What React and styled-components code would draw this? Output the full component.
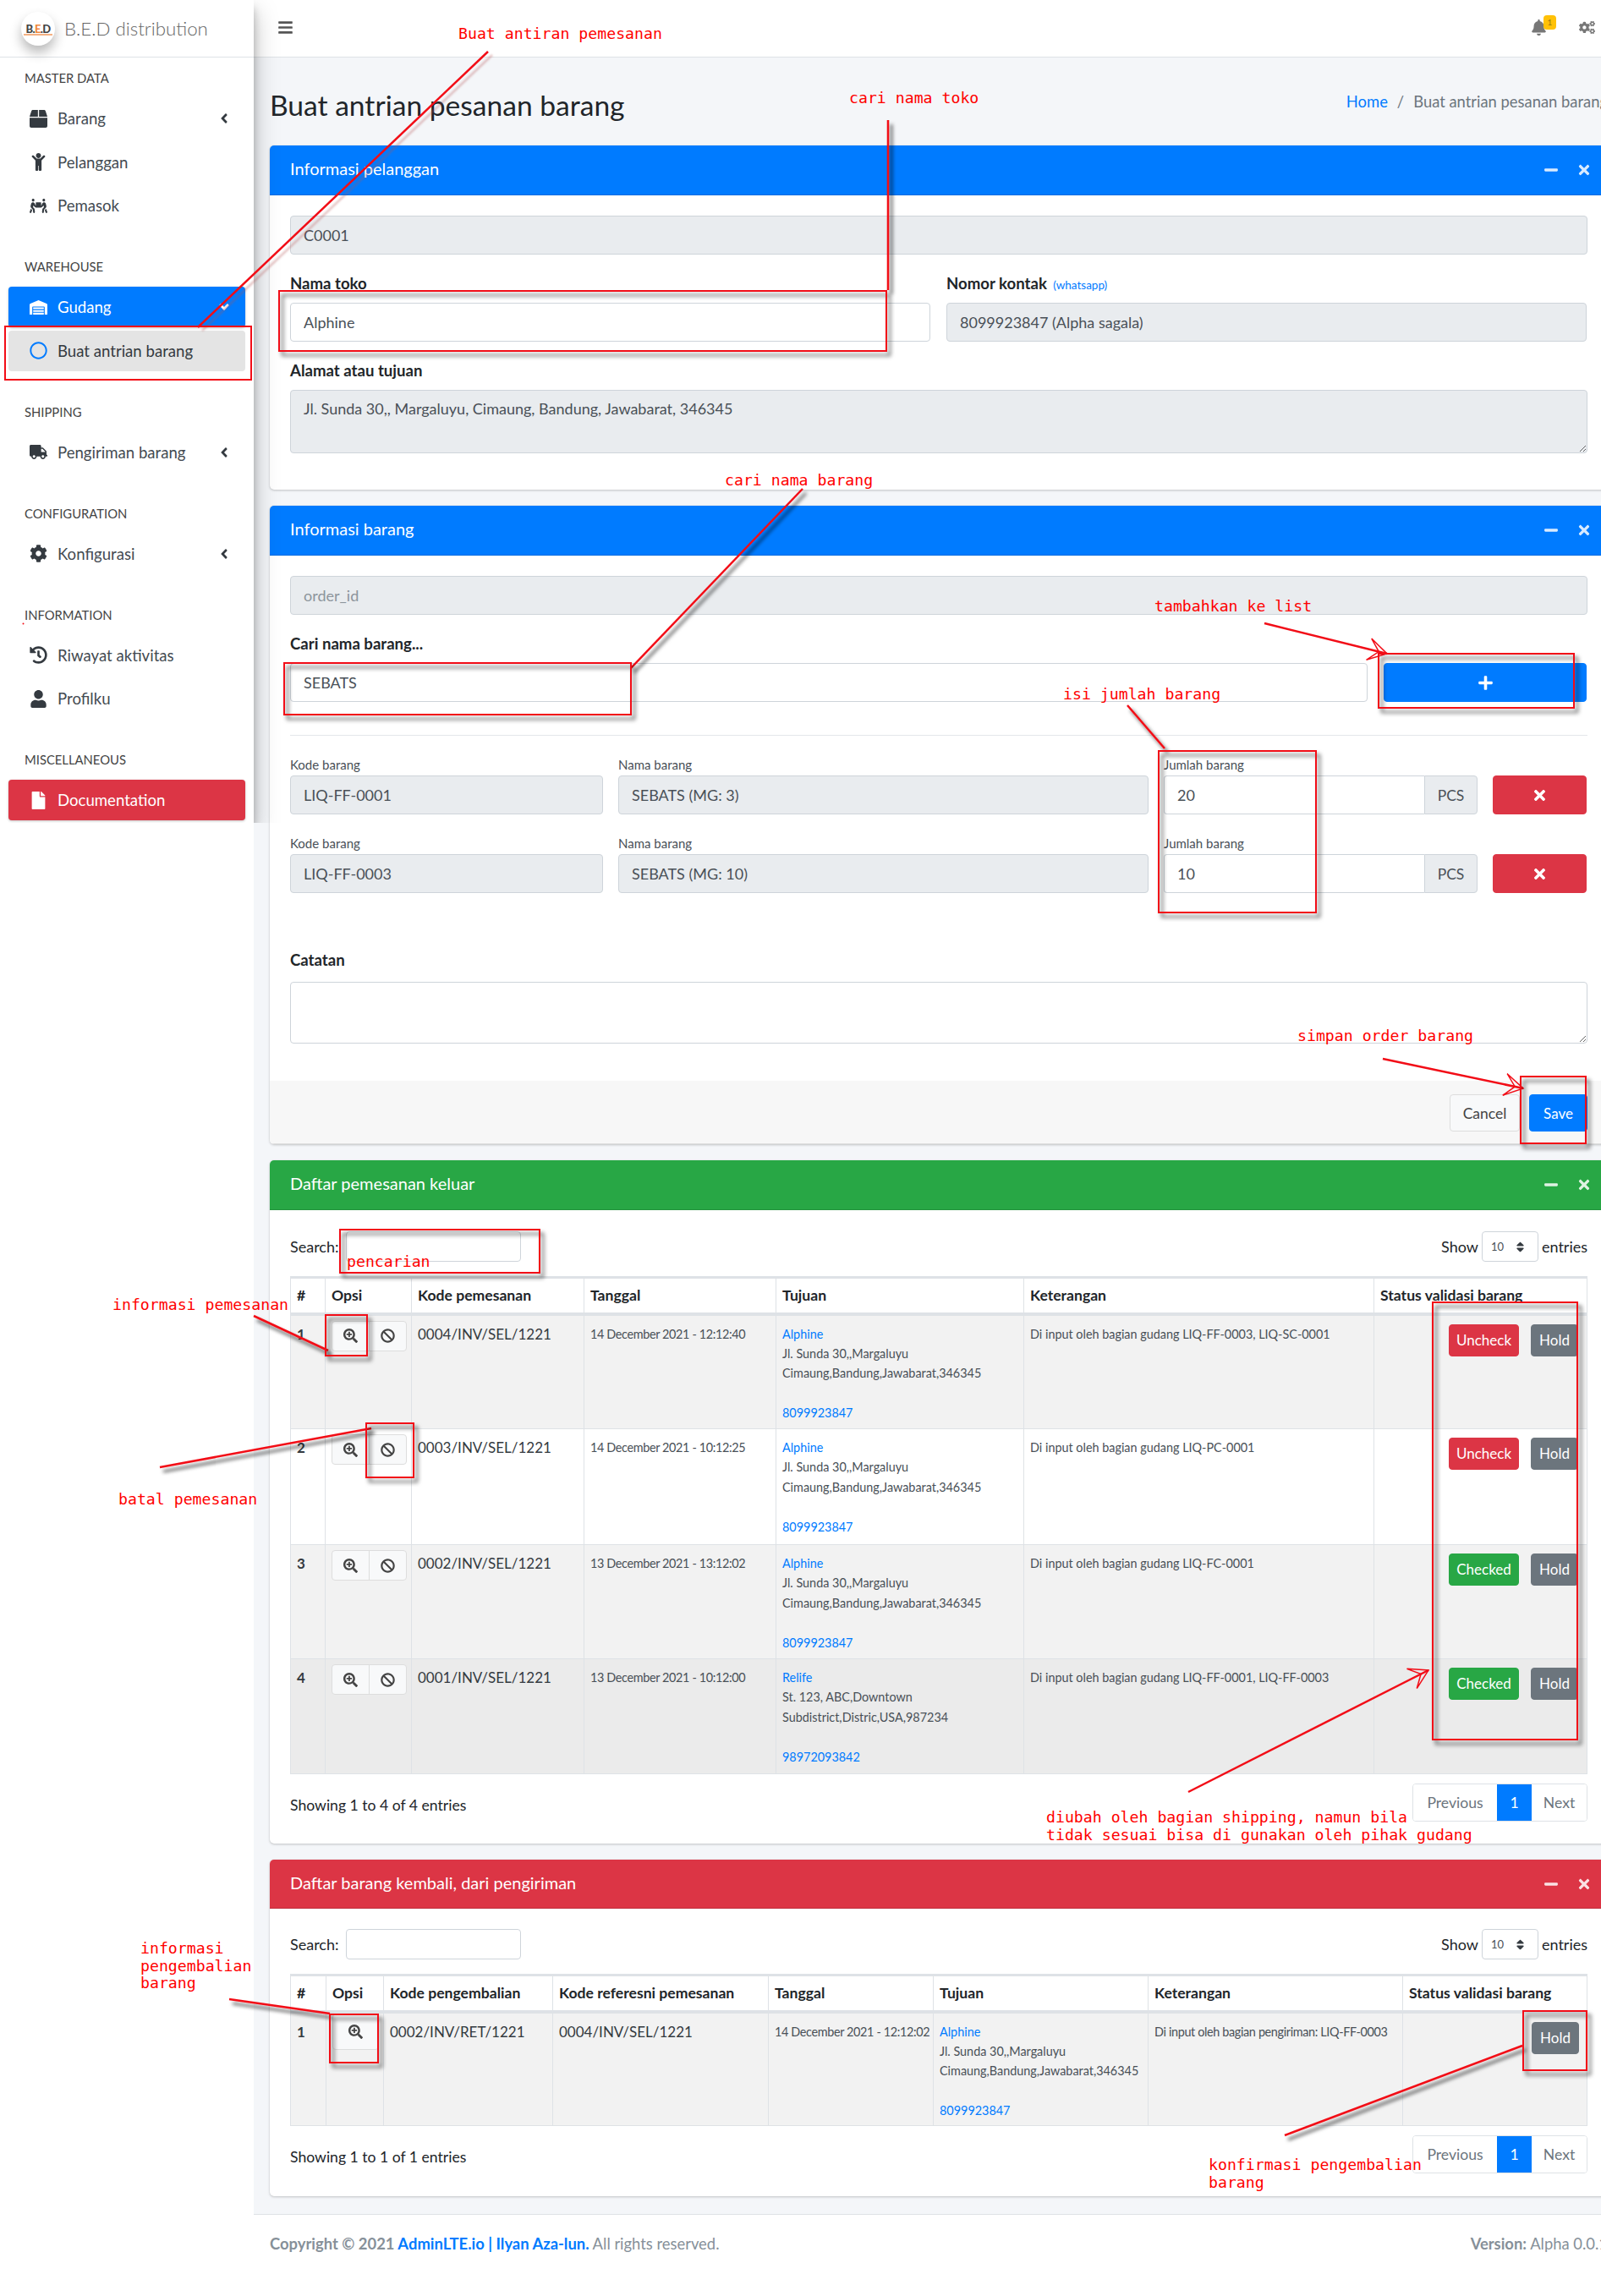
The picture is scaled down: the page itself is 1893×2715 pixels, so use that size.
import React from "react";
import styled, { createGlobalStyle } from "styled-components";
import {
  FaAngleLeft,
  FaBan,
  FaBars,
  FaBell,
  FaBox,
  FaChild,
  FaCog,
  FaCogs,
  FaFile,
  FaHistory,
  FaMinus,
  FaPeopleCarry,
  FaPlus,
  FaRegCircle,
  FaSearchPlus,
  FaSort,
  FaTimes,
  FaTruck,
  FaUser,
  FaWarehouse,
} from "react-icons/fa";

const GlobalStyle = createGlobalStyle`
  html, body { margin: 0; padding: 0; background: #fff; }
  * { box-sizing: border-box; }
  body {
    font-family: Lato, "Noto Sans", sans-serif;
    font-size: 18px;
    color: #212529;
  }
`;

const Page = styled.div`
  position: relative;
  display: flex;
  width: 1893px;
  height: 2715px;
  overflow: hidden;
  background: #fff;
`;

/* ---------- sidebar ---------- */
const Sidebar = styled.aside`
  position: relative;
  z-index: 3;
  flex: 0 0 300px;
  height: 973px;
  background: #fff;
  box-shadow: 0 14px 28px rgba(0, 0, 0, 0.25), 0 10px 10px rgba(0, 0, 0, 0.22);
  clip-path: inset(0 -40px 0 0);
`;

const Brand = styled.div`
  display: flex;
  align-items: center;
  gap: 11px;
  height: 68px;
  padding-left: 25px;
  border-bottom: 1px solid #dee2e6;
`;

const LogoCircle = styled.div`
  position: relative;
  display: flex;
  align-items: center;
  justify-content: center;
  width: 40px;
  height: 40px;
  border-radius: 50%;
  background: #fff;
  box-shadow: 0 8px 14px rgba(0, 0, 0, 0.28);
  font-size: 13px;
  font-weight: 900;
  letter-spacing: -0.6px;
  color: #444;
  b { color: #f08a3c; }
  &::after {
    content: "";
    position: absolute;
    left: 3px;
    right: 3px;
    top: 26px;
    height: 2px;
    background: #f4b183;
  }
`;

const BrandName = styled.span`
  font-size: 22.3px;
  font-weight: 300;
  color: #666;
`;

const SideNav = styled.nav`
  display: flex;
  flex-direction: column;
  gap: 36px;
  padding: 12px 10px 0;
`;

const NavSection = styled.div`
  display: flex;
  flex-direction: column;
  gap: 3.5px;
`;

const NavHeader = styled.div`
  height: 24px;
  margin-bottom: 8.5px;
  padding-left: 19px;
  font-size: 14.8px;
  line-height: 24px;
  color: #444;
`;

const NavItem = styled.div`
  display: flex;
  align-items: center;
  height: 48px;
  padding: 0 19px 0 20px;
  border-radius: 4px;
  font-size: 18.6px;
  color: ${(p) => (p.$tone ? (p.$tone === "sub" ? "#343a40" : "#fff") : "#444b52")};
  background: ${(p) =>
    p.$tone === "blue"
      ? "#007bff"
      : p.$tone === "red"
      ? "#dc3545"
      : p.$tone === "sub"
      ? "#e4e4e4"
      : "transparent"};
  box-shadow: ${(p) =>
    p.$tone === "sub" || !p.$tone ? "none" : "0 1px 3px rgba(0, 0, 0, 0.24)"};
`;

const NavIcon = styled.span`
  display: flex;
  flex: 0 0 30px;
  align-items: center;
  justify-content: center;
  margin-right: 8px;
  font-size: 21px;
  color: ${(p) => (p.$tone === "sub" ? "#007bff" : p.$tone ? "#fff" : "#343a40")};
  svg { flex: none; width: auto; }
`;

const NavArrow = styled.span`
  display: flex;
  margin-left: auto;
  margin-right: -3px;
  font-size: 18px;
  color: ${(p) => (p.$open ? "#fff" : "#343a40")};
  transform: ${(p) => (p.$open ? "rotate(-90deg)" : "none")};
`;

/* ---------- main column ---------- */
const Main = styled.div`
  flex: 0 0 1619px;
  display: flex;
  flex-direction: column;
`;

const Navbar = styled.header`
  display: flex;
  align-items: center;
  height: 68px;
  padding: 0 34px 2px 28px;
  background: #fff;
  border-bottom: 1px solid #dee2e6;
  color: #777;
  font-size: 19px;
  svg { width: auto; }
`;

const Burger = styled.span`
  display: flex;
  color: #555;
`;

const NavbarRight = styled.div`
  display: flex;
  align-items: center;
  gap: 38px;
  margin-left: auto;
`;

const BellWrap = styled.span`
  position: relative;
  display: flex;
`;

const BellBadge = styled.span`
  position: absolute;
  top: -5px;
  left: 15px;
  width: 15px;
  height: 17px;
  border-radius: 4px;
  background: #ffc107;
  color: #9a7a10;
  font-size: 10px;
  line-height: 17px;
  text-align: center;
`;

const Content = styled.main`
  flex: 1;
  padding: 0 19px;
  background: #f4f6f9;
`;

const ContentHeader = styled.div`
  display: flex;
  justify-content: space-between;
  height: 104px;
  padding-top: 34px;
`;

const PageTitle = styled.h1`
  margin: 0;
  font-size: 33.6px;
  font-weight: 400;
  line-height: 44px;
  color: #212529;
`;

const Breadcrumb = styled.div`
  display: flex;
  gap: 11px;
  margin-top: 6px;
  font-size: 18.4px;
  line-height: 24px;
  color: #6c757d;
`;

const Link = styled.a`
  color: #007bff;
`;

const Card = styled.section`
  margin-bottom: 19px;
  border-radius: 5px;
  background: #fff;
  box-shadow: 0 0 1px rgba(0, 0, 0, 0.125), 0 1px 3px rgba(0, 0, 0, 0.2);
  overflow: hidden;
`;

const CardHeader = styled.div`
  display: flex;
  align-items: center;
  justify-content: space-between;
  height: ${(p) => p.$height || 59}px;
  padding: 0 19px 0 24px;
  background: ${(p) => p.$color};
  border-bottom: 1px solid rgba(0, 0, 0, 0.125);
  color: #fff;
`;

const CardTitle = styled.h3`
  margin: 0 0 4px;
  font-size: 20px;
  font-weight: 400;
`;

const CardTools = styled.div`
  display: flex;
  align-items: center;
  gap: 21px;
  font-size: 18px;
  color: rgba(255, 255, 255, 0.85);
  svg { display: block; width: auto; }
`;

const CardBody = styled.div`
  padding: ${(p) => p.$top || 24}px 24px ${(p) => p.$bottom || 19}px;
`;

const FormGroup = styled.div`
  margin-bottom: 23px;
`;

const Row = styled.div`
  display: grid;
  grid-template-columns: 757px 757px;
  column-gap: 19px;
`;

const Label = styled.label`
  display: block;
  height: 24px;
  margin-bottom: ${(p) => p.$gap || 10}px;
  font-size: 18.6px;
  font-weight: 700;
  line-height: 22px;
  color: #212529;
`;

const LabelNote = styled.small`
  margin-left: 3px;
  font-size: 13.5px;
  font-weight: 400;
  color: #007bff;
`;

const Input = styled.input`
  display: block;
  width: 100%;
  height: ${(p) => p.$height || 46}px;
  padding: 0 15px;
  border: 1px solid #ced4da;
  border-radius: 4px;
  background: ${(p) => (p.readOnly ? "#e9ecef" : "#fff")};
  font: inherit;
  font-size: 18px;
  color: #495057;
  outline: none;
  &::placeholder { color: #8d959c; }
`;

const TextArea = styled.textarea`
  display: block;
  width: 100%;
  height: ${(p) => p.$height}px;
  padding: 10px 15px;
  border: 1px solid #ced4da;
  border-radius: 4px;
  background: ${(p) => (p.readOnly ? "#e9ecef" : "#fff")};
  font: inherit;
  font-size: 18px;
  color: #495057;
  outline: none;
`;

const SearchRow = styled.div`
  display: grid;
  grid-template-columns: 1274px 240px;
  column-gap: 19px;
  margin-bottom: 39px;
`;

const Button = styled.button`
  display: inline-flex;
  align-items: center;
  justify-content: center;
  height: ${(p) => p.$height || 38}px;
  width: ${(p) => (p.$width ? `${p.$width}px` : "auto")};
  padding: 0;
  border: 1px solid ${(p) => p.$bg};
  border-radius: 4px;
  background: ${(p) => p.$bg};
  color: #fff;
  font: inherit;
  font-size: 17px;
  svg { font-size: 19px; width: auto; }
`;

const Divider = styled.hr`
  margin: 0 0 23px;
  border: 0;
  border-top: 1px solid #e4e7ea;
`;

const ItemRow = styled.div`
  display: grid;
  grid-template-columns: 370px 627px 371px 111px;
  column-gap: 18px;
  margin-bottom: 23px;
  align-items: end;
`;

const SmallLabel = styled.label`
  display: block;
  height: 24px;
  padding-top: 1px;
  font-size: 15px;
  line-height: 20px;
  color: #495057;
`;

const InputGroup = styled.div`
  display: flex;
`;

const GroupedInput = styled(Input)`
  flex: 1;
  min-width: 0;
  border-radius: 4px 0 0 4px;
  border-right: 0;
`;

const GroupAddon = styled.span`
  display: flex;
  flex: 0 0 63px;
  align-items: center;
  justify-content: center;
  height: 46px;
  border: 1px solid #ced4da;
  border-radius: 0 4px 4px 0;
  background: #e9ecef;
  color: #495057;
  font-size: 17.5px;
`;

const CatatanGroup = styled.div`
  margin-top: 68px;
  padding-bottom: 43px;
`;

const CardFooter = styled.div`
  display: flex;
  justify-content: flex-end;
  gap: 11px;
  height: 75px;
  padding: 16px 24px 0;
  background: #f7f7f7;
  border-bottom: 1px solid #ddd;
`;

const GhostButton = styled.button`
  width: 83px;
  height: 44px;
  border: 1px solid #ddd;
  border-radius: 4px;
  background: #f8f9fa;
  color: #444;
  font: inherit;
  font-size: 17.5px;
`;

/* ---------- data tables ---------- */
const TableTop = styled.div`
  display: flex;
  align-items: center;
  justify-content: space-between;
  height: 36px;
  margin-bottom: 17px;
  font-size: 18px;
`;

const SearchLabel = styled.label`
  display: flex;
  align-items: center;
  gap: 9px;
`;

const SearchInput = styled.input`
  width: 207px;
  height: 36px;
  border: 1px solid #ced4da;
  border-radius: 4px;
  background: #fff;
`;

const ShowLabel = styled.div`
  display: flex;
  align-items: center;
  gap: 4px;
`;

const SelectBox = styled.span`
  display: flex;
  align-items: center;
  justify-content: space-between;
  width: 67px;
  height: 36px;
  padding: 0 13px 0 10px;
  border: 1px solid #ced4da;
  border-radius: 4px;
  color: #495057;
  font-size: 13px;
  svg { font-size: 15px; width: auto; color: #343a40; }
`;

const Table = styled.table`
  width: 1533px;
  border-collapse: collapse;
  table-layout: fixed;
  border-top: 3px solid #dee2e6;
`;

const Th = styled.th`
  height: 43px;
  padding: 0 7px;
  border: 1px solid #dee2e6;
  border-top: 0;
  border-bottom: 4px solid #dee2e6;
  font-size: 17.6px;
  font-weight: 700;
  text-align: left;
  color: #212529;
  white-space: nowrap;
`;

const Tr = styled.tr`
  height: ${(p) => p.$height}px;
  background: ${(p) => p.$bg};
`;

const Td = styled.td`
  padding: ${(p) => p.$top ?? 10}px ${(p) => p.$right ?? 7}px 0 7px;
  border: 1px solid #dee2e6;
  vertical-align: top;
  font-size: ${(p) => (p.$small ? 14.4 : 17)}px;
  font-weight: ${(p) => (p.$bold ? 700 : 400)};
  line-height: 23.4px;
  color: ${(p) => (p.$small ? "#495057" : "#343a40")};
  letter-spacing: ${(p) => (p.$tight ? "-0.35px" : "0")};
  white-space: ${(p) => (p.$tight ? "nowrap" : "normal")};
`;

const AddressLine = styled.div`
  min-height: 23.4px;
  color: ${(p) => (p.$link ? "#007bff" : "inherit")};
`;

const BtnGroup = styled.div`
  display: flex;
  width: ${(p) => (p.$single ? 55 : 89)}px;
  height: ${(p) => (p.$single ? 43 : 36)}px;
  border: 1px solid #ddd;
  border-radius: 4px;
  background: #f8f9fa;
`;

const IconBtn = styled.span`
  display: flex;
  flex: 1;
  align-items: center;
  justify-content: center;
  font-size: 17px;
  color: #444;
  & + & { border-left: 1px solid #ddd; }
`;

const StatusCell = styled.div`
  display: flex;
  justify-content: flex-end;
  gap: 14px;
`;

const TableBottom = styled.div`
  display: flex;
  align-items: flex-start;
  justify-content: space-between;
  margin-top: 11px;
  font-size: 17.6px;
`;

const ShowingText = styled.div`
  padding-top: 15px;
`;

const Pagination = styled.div`
  display: flex;
  height: 45px;
  border: 1px solid #dee2e6;
  border-radius: 4px;
  overflow: hidden;
  color: #6c757d;
`;

const PageLink = styled.span`
  display: flex;
  align-items: center;
  justify-content: center;
  width: ${(p) => p.$width}px;
  background: ${(p) => (p.$active ? "#007bff" : "#fff")};
  color: ${(p) => (p.$active ? "#fff" : "#6c757d")};
`;

const Footer = styled.footer`
  display: flex;
  justify-content: space-between;
  height: 97px;
  padding: 23px 19px 0;
  border-top: 1px solid #dee2e6;
  font-size: 18.4px;
  line-height: 22px;
  color: #869099;
  b { font-weight: 700; }
`;

const FooterLink = styled.a`
  color: #007bff;
  font-weight: 700;
`;

/* ---------- red annotations on top of the page ---------- */
const Note = styled.div`
  position: absolute;
  z-index: 6;
  left: ${(p) => p.$x}px;
  top: ${(p) => p.$y}px;
  font-family: "DejaVu Sans Mono", monospace;
  font-size: 18.2px;
  line-height: 20.5px;
  color: #ff0000;
  white-space: pre;
`;

const Frame = styled.div`
  position: absolute;
  z-index: 5;
  left: ${(p) => p.$x}px;
  top: ${(p) => p.$y}px;
  width: ${(p) => p.$w}px;
  height: ${(p) => p.$h}px;
  border: 2px solid #f20d17;
  filter: ${(p) => (p.$flat ? "none" : "drop-shadow(4px 5px 2.5px rgba(0, 0, 0, 0.7))")};
  pointer-events: none;
`;

const Overlay = styled.svg`
  position: absolute;
  z-index: 5;
  left: 0;
  top: 0;
  width: 1893px;
  height: 2715px;
  pointer-events: none;
`;

const menu = [
  {
    title: "MASTER DATA",
    items: [
      { label: "Barang", icon: <FaBox />, arrow: true },
      { label: "Pelanggan", icon: <FaChild /> },
      { label: "Pemasok", icon: <FaPeopleCarry /> },
    ],
  },
  {
    title: "WAREHOUSE",
    items: [
      { label: "Gudang", icon: <FaWarehouse />, arrow: true, tone: "blue" },
      { label: "Buat antrian barang", icon: <FaRegCircle />, tone: "sub" },
    ],
  },
  {
    title: "SHIPPING",
    items: [{ label: "Pengiriman barang", icon: <FaTruck />, arrow: true }],
  },
  {
    title: "CONFIGURATION",
    items: [{ label: "Konfigurasi", icon: <FaCog />, arrow: true }],
  },
  {
    title: "INFORMATION",
    items: [
      { label: "Riwayat aktivitas", icon: <FaHistory /> },
      { label: "Profilku", icon: <FaUser /> },
    ],
  },
  {
    title: "MISCELLANEOUS",
    items: [{ label: "Documentation", icon: <FaFile />, tone: "red" }],
  },
];

const orderCols = [41, 102, 204, 227, 293, 414, 252];
const returnCols = [42, 68, 200, 255, 195, 254, 301, 218];

const alphine = {
  name: "Alphine",
  lines: ["Jl. Sunda 30,,Margaluyu", "Cimaung,Bandung,Jawabarat,346345"],
  phone: "8099923847",
};

const orders = [
  {
    no: 1,
    code: "0004/INV/SEL/1221",
    date: "14 December 2021 - 12:12:40",
    to: alphine,
    note: "Di input oleh bagian gudang LIQ-FF-0003, LIQ-SC-0001",
    status: "Uncheck",
    height: 136,
    bg: "#f2f2f2",
  },
  {
    no: 2,
    code: "0003/INV/SEL/1221",
    date: "14 December 2021 - 10:12:25",
    to: alphine,
    note: "Di input oleh bagian gudang LIQ-PC-0001",
    status: "Uncheck",
    height: 137,
    bg: "#fff",
  },
  {
    no: 3,
    code: "0002/INV/SEL/1221",
    date: "13 December 2021 - 13:12:02",
    to: alphine,
    note: "Di input oleh bagian gudang LIQ-FC-0001",
    status: "Checked",
    height: 135,
    bg: "#f2f2f2",
  },
  {
    no: 4,
    code: "0001/INV/SEL/1221",
    date: "13 December 2021 - 10:12:00",
    to: {
      name: "Relife",
      lines: ["St. 123, ABC,Downtown", "Subdistrict,Distric,USA,987234"],
      phone: "98972093842",
    },
    note: "Di input oleh bagian gudang LIQ-FF-0001, LIQ-FF-0003",
    status: "Checked",
    height: 136,
    bg: "#ebebeb",
  },
];

const notes = [
  { x: 542, y: 30, text: "Buat antiran pemesanan" },
  { x: 1004, y: 106, text: "cari nama toko" },
  { x: 857, y: 558, text: "cari nama barang" },
  { x: 1365, y: 707, text: "tambahkan ke list" },
  { x: 1257, y: 811, text: "isi jumlah barang" },
  { x: 1534, y: 1215, text: "simpan order barang" },
  { x: 410, y: 1482, text: "pencarian" },
  { x: 133, y: 1533, text: "informasi pemesanan" },
  { x: 140, y: 1763, text: "batal pemesanan" },
  {
    x: 1237,
    y: 2139,
    text: "diubah oleh bagian shipping, namun bila\ntidak sesuai bisa di gunakan oleh pihak gudang",
  },
  { x: 166, y: 2294, text: "informasi\npengembalian\nbarang" },
  { x: 1429, y: 2550, text: "konfirmasi pengembalian\nbarang" },
];

const frames = [
  { x: 5, y: 385, w: 293, h: 65, flat: true },
  { x: 329, y: 343, w: 720, h: 73 },
  { x: 335, y: 783, w: 412, h: 63 },
  { x: 1629, y: 772, w: 233, h: 66 },
  { x: 1369, y: 887, w: 188, h: 193 },
  { x: 1797, y: 1272, w: 79, h: 81 },
  { x: 401, y: 1453, w: 238, h: 53 },
  { x: 384, y: 1554, w: 51, h: 50 },
  { x: 432, y: 1682, w: 58, h: 66 },
  { x: 1693, y: 1539, w: 173, h: 519 },
  { x: 389, y: 2381, w: 59, h: 59 },
  { x: 1800, y: 2377, w: 77, h: 72 },
];

// x1, y1, x2, y2 of every red line, head means it ends in an arrow head
const lines = [
  { p: [1050, 142, 1050, 343], shadow: true },
  { p: [949, 578, 746, 790], shadow: true },
  { p: [1495, 737, 1640, 773], head: true },
  { p: [1333, 834, 1377, 885], shadow: true },
  { p: [1635, 1252, 1801, 1287], head: true },
  { p: [300, 1556, 388, 1597], shadow: true },
  { p: [189, 1735, 439, 1689], shadow: true },
  { p: [1405, 2119, 1689, 1975], head: true },
  { p: [271, 2364, 390, 2381], shadow: true },
  { p: [1519, 2525, 1800, 2419], shadow: true },
];

const arrowHead = ([x1, y1, x2, y2]) => {
  const a = Math.atan2(y2 - y1, x2 - x1);
  const at = (back, side) =>
    `${x2 - back * Math.cos(a) - side * Math.sin(a)},${y2 - back * Math.sin(a) + side * Math.cos(a)}`;
  return `${at(22, 13)} ${x2},${y2} ${at(22, -13)} ${at(10, 0)}`;
};

const SideMenu = () => (
  <SideNav>
    {menu.map((section) => (
      <NavSection key={section.title}>
        <NavHeader>{section.title}</NavHeader>
        {section.items.map((item) => (
          <NavItem key={item.label} $tone={item.tone}>
            <NavIcon $tone={item.tone}>{item.icon}</NavIcon>
            {item.label}
            {item.arrow && (
              <NavArrow $open={item.tone === "blue"}>
                <FaAngleLeft />
              </NavArrow>
            )}
          </NavItem>
        ))}
      </NavSection>
    ))}
  </SideNav>
);

const BoxHeader = ({ title, color, height }) => (
  <CardHeader $color={color} $height={height}>
    <CardTitle>{title}</CardTitle>
    <CardTools>
      <FaMinus />
      <FaTimes />
    </CardTools>
  </CardHeader>
);

const ItemLine = ({ code, name, qty }) => (
  <ItemRow>
    <div>
      <SmallLabel>Kode barang</SmallLabel>
      <Input readOnly value={code} />
    </div>
    <div>
      <SmallLabel>Nama barang</SmallLabel>
      <Input readOnly value={name} />
    </div>
    <div>
      <SmallLabel>Jumlah barang</SmallLabel>
      <InputGroup>
        <GroupedInput defaultValue={qty} />
        <GroupAddon>PCS</GroupAddon>
      </InputGroup>
    </div>
    <Button $bg="#dc3545" $height={46}>
      <FaTimes />
    </Button>
  </ItemRow>
);

const TableControls = () => (
  <TableTop>
    <SearchLabel>
      Search:
      <SearchInput />
    </SearchLabel>
    <ShowLabel>
      Show
      <SelectBox>
        10
        <FaSort />
      </SelectBox>
      entries
    </ShowLabel>
  </TableTop>
);

const TableFooter = ({ text }) => (
  <TableBottom>
    <ShowingText>{text}</ShowingText>
    <Pagination>
      <PageLink $width={99}>Previous</PageLink>
      <PageLink $width={41} $active>
        1
      </PageLink>
      <PageLink $width={65}>Next</PageLink>
    </Pagination>
  </TableBottom>
);

const Destination = ({ to }) => (
  <>
    <AddressLine $link>{to.name}</AddressLine>
    {to.lines.map((line) => (
      <AddressLine key={line}>{line}</AddressLine>
    ))}
    <AddressLine />
    <AddressLine $link>{to.phone}</AddressLine>
  </>
);

const OrdersTable = () => (
  <Table>
    <colgroup>
      {orderCols.map((w, i) => (
        <col key={i} width={w} />
      ))}
    </colgroup>
    <thead>
      <tr>
        {["#", "Opsi", "Kode pemesanan", "Tanggal", "Tujuan", "Keterangan", "Status validasi barang"].map(
          (h) => (
            <Th key={h}>{h}</Th>
          )
        )}
      </tr>
    </thead>
    <tbody>
      {orders.map((o) => (
        <Tr key={o.no} $height={o.height} $bg={o.bg}>
          <Td $bold>{o.no}</Td>
          <Td $top={6}>
            <BtnGroup>
              <IconBtn>
                <FaSearchPlus />
              </IconBtn>
              <IconBtn>
                <FaBan />
              </IconBtn>
            </BtnGroup>
          </Td>
          <Td>{o.code}</Td>
          <Td $small $tight>
            {o.date}
          </Td>
          <Td $small>
            <Destination to={o.to} />
          </Td>
          <Td $small>{o.note}</Td>
          <Td $right={10}>
            <StatusCell>
              <Button $bg={o.status === "Checked" ? "#28a745" : "#dc3545"} $width={83}>
                {o.status}
              </Button>
              <Button $bg="#6c757d" $width={56}>
                Hold
              </Button>
            </StatusCell>
          </Td>
        </Tr>
      ))}
    </tbody>
  </Table>
);

const ReturnsTable = () => (
  <Table>
    <colgroup>
      {returnCols.map((w, i) => (
        <col key={i} width={w} />
      ))}
    </colgroup>
    <thead>
      <tr>
        {[
          "#",
          "Opsi",
          "Kode pengembalian",
          "Kode referesni pemesanan",
          "Tanggal",
          "Tujuan",
          "Keterangan",
          "Status validasi barang",
        ].map((h) => (
          <Th key={h}>{h}</Th>
        ))}
      </tr>
    </thead>
    <tbody>
      <Tr $height={135} $bg="#f2f2f2">
        <Td $bold>1</Td>
        <Td $top={0}>
          <BtnGroup $single>
            <IconBtn>
              <FaSearchPlus />
            </IconBtn>
          </BtnGroup>
        </Td>
        <Td>0002/INV/RET/1221</Td>
        <Td>0004/INV/SEL/1221</Td>
        <Td $small $tight>
          14 December 2021 - 12:12:02
        </Td>
        <Td $small>
          <Destination to={alphine} />
        </Td>
        <Td $small $tight>
          Di input oleh bagian pengiriman: LIQ-FF-0003
        </Td>
        <Td $right={9}>
          <StatusCell>
            <Button $bg="#6c757d" $width={56}>
              Hold
            </Button>
          </StatusCell>
        </Td>
      </Tr>
    </tbody>
  </Table>
);

const Annotations = () => (
  <>
    <Overlay viewBox="0 0 1893 2715">
      <defs>
        <filter id="shade" filterUnits="userSpaceOnUse" x="0" y="0" width="1893" height="2715">
          <feDropShadow dx="4" dy="5" stdDeviation="2" floodColor="#000" floodOpacity="0.7" />
        </filter>
        <filter id="pink" filterUnits="userSpaceOnUse" x="0" y="0" width="1893" height="2715">
          <feDropShadow dx="5" dy="4" stdDeviation="1" floodColor="#b35050" floodOpacity="0.35" />
        </filter>
      </defs>
      <line x1="577" y1="61" x2="234" y2="387" stroke="#f20d17" strokeWidth="2.5" filter="url(#pink)" />
      {lines.map((l) => (
        <g key={l.p.join()} filter={l.shadow ? "url(#shade)" : undefined}>
          <line x1={l.p[0]} y1={l.p[1]} x2={l.p[2]} y2={l.p[3]} stroke="#f20d17" strokeWidth="2.5" />
          {l.head && <polygon points={arrowHead(l.p)} fill="none" stroke="#f20d17" strokeWidth="1.5" />}
        </g>
      ))}
      <circle cx="27.5" cy="737.5" r="1" fill="#f20d17" />
    </Overlay>
    {frames.map((f) => (
      <Frame key={`${f.x}-${f.y}`} $x={f.x} $y={f.y} $w={f.w} $h={f.h} $flat={f.flat} />
    ))}
    {notes.map((n) => (
      <Note key={n.text} $x={n.x} $y={n.y}>
        {n.text}
      </Note>
    ))}
  </>
);

const App = () => {
  return (
    <>
      <GlobalStyle />
      <Page>
        <Sidebar>
          <Brand>
            <LogoCircle>
              <span>
                B.<b>E</b>.D
              </span>
            </LogoCircle>
            <BrandName>B.E.D distribution</BrandName>
          </Brand>
          <SideMenu />
        </Sidebar>

        <Main>
          <Navbar>
            <Burger>
              <FaBars />
            </Burger>
            <NavbarRight>
              <BellWrap>
                <FaBell />
                <BellBadge>1</BellBadge>
              </BellWrap>
              <FaCogs />
            </NavbarRight>
          </Navbar>

          <Content>
            <ContentHeader>
              <PageTitle>Buat antrian pesanan barang</PageTitle>
              <Breadcrumb>
                <Link>Home</Link>
                <span>/</span>
                <span>Buat antrian pesanan barang</span>
              </Breadcrumb>
            </ContentHeader>

            <Card>
              <BoxHeader title="Informasi pelanggan" color="#007bff" />
              <CardBody $bottom={43}>
                <FormGroup>
                  <Input readOnly value="C0001" />
                </FormGroup>
                <FormGroup>
                  <Row>
                    <div>
                      <Label>Nama toko</Label>
                      <Input defaultValue="Alphine" />
                    </div>
                    <div>
                      <Label>
                        Nomor kontak <LabelNote>(whatsapp)</LabelNote>
                      </Label>
                      <Input readOnly value="8099923847 (Alpha sagala)" />
                    </div>
                  </Row>
                </FormGroup>
                <div>
                  <Label>Alamat atau tujuan</Label>
                  <TextArea
                    readOnly
                    $height={75}
                    value="Jl. Sunda 30,, Margaluyu, Cimaung, Bandung, Jawabarat, 346345"
                  />
                </div>
              </CardBody>
            </Card>

            <Card>
              <BoxHeader title="Informasi barang" color="#007bff" />
              <CardBody $bottom={1}>
                <FormGroup>
                  <Input readOnly placeholder="order_id" />
                </FormGroup>
                <Label>Cari nama barang...</Label>
                <SearchRow>
                  <Input defaultValue="SEBATS" />
                  <Button $bg="#007bff" $height={46}>
                    <FaPlus />
                  </Button>
                </SearchRow>
                <Divider />
                <ItemLine code="LIQ-FF-0001" name="SEBATS (MG: 3)" qty="20" />
                <ItemLine code="LIQ-FF-0003" name="SEBATS (MG: 10)" qty="10" />
                <CatatanGroup>
                  <Label $gap={13}>Catatan</Label>
                  <TextArea $height={73} />
                </CatatanGroup>
              </CardBody>
              <CardFooter>
                <GhostButton>Cancel</GhostButton>
                <Button $bg="#007bff" $width={69} $height={44}>
                  Save
                </Button>
              </CardFooter>
            </Card>

            <Card>
              <BoxHeader title="Daftar pemesanan keluar" color="#28a745" />
              <CardBody $top={25} $bottom={26}>
                <TableControls />
                <OrdersTable />
                <TableFooter text="Showing 1 to 4 of 4 entries" />
              </CardBody>
            </Card>

            <Card>
              <BoxHeader title="Daftar barang kembali, dari pengiriman" color="#dc3545" height={58} />
              <CardBody $top={24} $bottom={27}>
                <TableControls />
                <ReturnsTable />
                <TableFooter text="Showing 1 to 1 of 1 entries" />
              </CardBody>
            </Card>
          </Content>

          <Footer>
            <div>
              <b>Copyright © 2021 </b>
              <FooterLink>AdminLTE.io</FooterLink>
              <FooterLink> | </FooterLink>
              <FooterLink>Ilyan Aza-lun.</FooterLink> All rights reserved.
            </div>
            <div>
              <b>Version:</b> Alpha 0.0.1
            </div>
          </Footer>
        </Main>

        <Annotations />
      </Page>
    </>
  );
};

export default App;
